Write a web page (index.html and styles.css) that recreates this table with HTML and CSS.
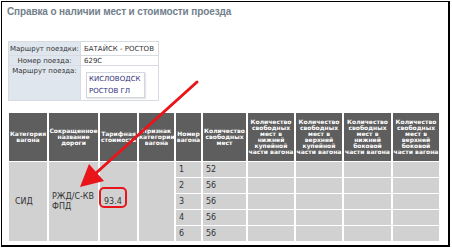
FILE: index.html
```html
<!DOCTYPE html>
<html lang="ru">
<head>
<meta charset="utf-8">
<title>Справка</title>
<link rel="stylesheet" href="styles.css">
</head>
<body>
<div class="frame">
  <h1 class="title">Справка о наличии мест и стоимости проезда</h1>
  <table class="info">
    <tr class="r1"><td class="lbl">Маршрут поездки:</td><td class="val">БАТАЙСК - РОСТОВ</td></tr>
    <tr class="r2"><td class="lbl">Номер поезда:</td><td class="val">629С</td></tr>
    <tr class="r3"><td class="lbl top">Маршрут поезда:</td><td class="val"><div class="route"><div>КИСЛОВОДСК</div><div>РОСТОВ ГЛ</div></div></td></tr>
  </table>
  <table class="grid">
    <colgroup>
      <col class="c1"><col class="c2"><col class="c3"><col class="c4"><col class="c5"><col class="c6"><col class="c7"><col class="c8"><col class="c9"><col class="c10">
    </colgroup>
    <thead>
      <tr>
        <th>Категория<br>вагона</th>
        <th>Сокращенное<br>название<br>дороги</th>
        <th>Тарифная<br>стоимость</th>
        <th>Признак<br>категории<br>вагона</th>
        <th>Номер<br>вагона</th>
        <th>Количество<br>свободных<br>мест</th>
        <th>Количество<br>свободных<br>мест в<br>нижней<br>купейной<br>части вагона</th>
        <th>Количество<br>свободных<br>мест в<br>верхней<br>купейной<br>части вагона</th>
        <th>Количество<br>свободных<br>мест в<br>нижней<br>боковой<br>части вагона</th>
        <th>Количество<br>свободных<br>мест в<br>верхней<br>боковой<br>части вагона</th>
      </tr>
    </thead>
    <tbody>
      <tr>
        <td rowspan="5" class="first">СИД</td>
        <td rowspan="5">РЖД/С-КВ<br>ФПД</td>
        <td rowspan="5" class="price">93.4</td>
        <td rowspan="5"></td>
        <td>1</td><td>52</td><td></td><td></td><td></td><td></td>
      </tr>
      <tr><td>2</td><td>56</td><td></td><td></td><td></td><td></td></tr>
      <tr><td>3</td><td>56</td><td></td><td></td><td></td><td></td></tr>
      <tr><td>4</td><td>56</td><td></td><td></td><td></td><td></td></tr>
      <tr><td>6</td><td>56</td><td></td><td></td><td></td><td></td></tr>
    </tbody>
  </table>
</div>
<div class="mark"></div>
<svg class="arrow" width="452" height="249" viewBox="0 0 452 249">
  <line x1="197" y1="82" x2="95" y2="174" stroke="#e8151b" stroke-width="3" stroke-linecap="round"/>
  <polygon points="80,187 89,164 104,181" fill="#e8151b"/>
</svg>
</body>
</html>
```
FILE: styles.css
```css
html, body {
  margin: 0;
  padding: 0;
  background: #fff;
}
body {
  position: relative;
  width: 452px;
  height: 249px;
  overflow: hidden;
  font-family: "DejaVu Sans", Verdana, sans-serif;
}
.frame {
  box-sizing: border-box;
  margin: 1px 0 0 1px;
  width: 449px;
  height: 246px;
  border-style: solid;
  border-color: #000;
  border-width: 1px 2px 2px 1px;
  overflow: hidden;
}
.title {
  margin: 4px 0 0 5px;
  font: bold 10px/12px "Liberation Sans", Arial, sans-serif;
  letter-spacing: -0.12px;
  color: #72808c;
}
.info {
  margin: 23px 0 0 6px;
  border-collapse: collapse;
  border: 1px solid #c9ced6;
  font-size: 7px;
  color: #333;
}
.info td {
  border: 1px solid #d8dce2;
  padding: 0;
  white-space: nowrap;
}
.info .lbl {
  background: #dfe6ee;
  width: 71px;
  text-align: center;
}
.info .lbl.top {
  vertical-align: top;
  padding-top: 1px;
}
.info .val {
  width: 74px;
  padding-left: 3px;
}
.info .r1 td { height: 13px; }
.info .r2 td { height: 9px; }
.route {
  margin: 6px 0 2px 2px;
  width: 55px;
  border: 1px solid #d3d7dd;
  box-shadow: 1px 1px 1px #e6e6e6;
  color: #2f2f7a;
  padding-left: 2px;
}
.route div {
  height: 12px;
  line-height: 12px;
}
.grid {
  margin: 11px 0 0 5px;
  border-collapse: separate;
  border-spacing: 2px 1px;
  table-layout: fixed;
  width: 434px;
}
.c1 { width: 38px; }
.c2 { width: 49px; }
.c3 { width: 37px; }
.c4 { width: 35px; }
.c5 { width: 25px; }
.c6 { width: 43px; }
.c7 { width: 46px; }
.c8 { width: 46px; }
.c9 { width: 47px; }
.c10 { width: 46px; }
.grid th {
  background: #5e5e5e;
  color: #fff;
  font-weight: bold;
  font-size: 6px;
  line-height: 6px;
  height: 48px;
  padding: 0;
  text-align: center;
  vertical-align: middle;
  white-space: nowrap;
  overflow: hidden;
}
.grid td {
  background: #d1d1d1;
  color: #333;
  font-size: 8px;
  line-height: 10px;
  height: 15px;
  padding: 0 3px;
  vertical-align: middle;
  white-space: nowrap;
}
.grid td.first {
  padding-left: 6px;
}
.grid td.price {
  padding-left: 4px;
}
.mark {
  position: absolute;
  left: 99px;
  top: 187px;
  width: 24px;
  height: 17px;
  border: 2px solid #e8151b;
  border-radius: 5px;
}
.arrow {
  position: absolute;
  left: 0;
  top: 0;
  pointer-events: none;
}
```
